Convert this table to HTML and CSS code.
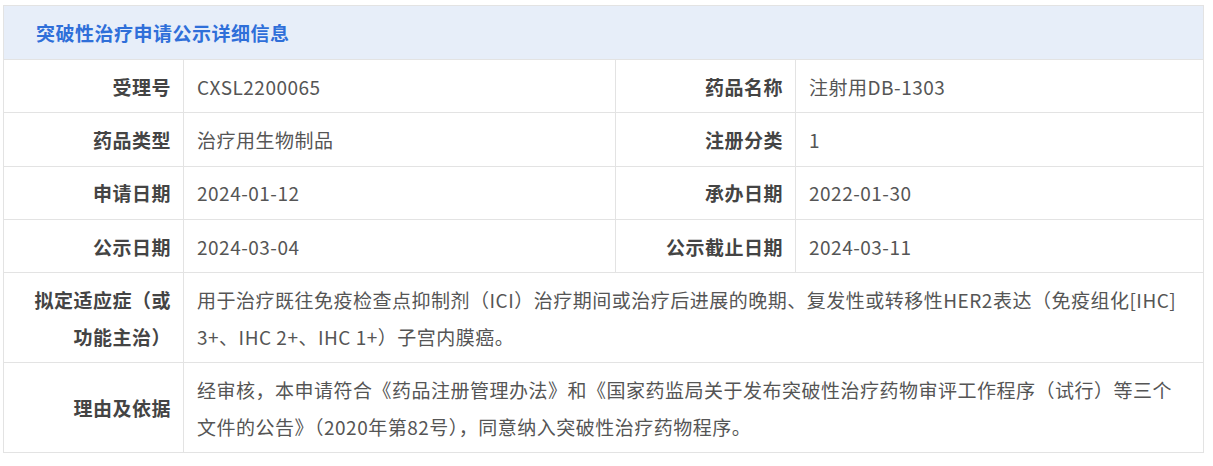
FILE: index.html
```html
<!DOCTYPE html>
<html lang="zh">
<head>
<meta charset="utf-8">
<link rel="stylesheet" href="styles.css">
</head>
<body>
<table class="detail">
  <colgroup>
    <col class="c-label"><col class="c-value"><col class="c-label"><col class="c-value2">
  </colgroup>
  <thead>
    <tr><th colspan="4" class="title">突破性治疗申请公示详细信息</th></tr>
  </thead>
  <tbody>
    <tr><td class="label">受理号</td><td class="value">CXSL2200065</td><td class="label">药品名称</td><td class="value">注射用DB-1303</td></tr>
    <tr><td class="label">药品类型</td><td class="value">治疗用生物制品</td><td class="label">注册分类</td><td class="value">1</td></tr>
    <tr><td class="label">申请日期</td><td class="value">2024-01-12</td><td class="label">承办日期</td><td class="value">2022-01-30</td></tr>
    <tr><td class="label">公示日期</td><td class="value">2024-03-04</td><td class="label">公示截止日期</td><td class="value">2024-03-11</td></tr>
    <tr class="multi"><td class="label">拟定适应症（或功能主治）</td><td class="value" colspan="3">用于治疗既往免疫检查点抑制剂（ICI）治疗期间或治疗后进展的晚期、复发性或转移性HER2表达（免疫组化[IHC] 3+、IHC 2+、IHC 1+）子宫内膜癌。</td></tr>
    <tr class="multi"><td class="label">理由及依据</td><td class="value" colspan="3">经审核，本申请符合《药品注册管理办法》和《国家药监局关于发布突破性治疗药物审评工作程序（试行）等三个文件的公告》（2020年第82号），同意纳入突破性治疗药物程序。</td></tr>
  </tbody>
</table>
</body>
</html>
```

FILE: styles.css
```css
html, body {
  margin: 0;
  padding: 0;
  background: #ffffff;
}
body {
  padding: 5px 0 0 3px;
  font-family: "Noto Sans CJK SC", "Noto Sans", sans-serif;
}
.detail {
  width: 1200px;
  border-collapse: collapse;
  table-layout: fixed;
  font-size: 19px;
  letter-spacing: 0.5px;
}
.c-label { width: 180px; }
.c-value { width: 432px; }
.c-value2 { width: 408px; }
.detail th, .detail td {
  border: 1px solid #e3e3e3;
}
.title {
  height: 54px;
  box-sizing: border-box;
  background: #e7eef9;
  color: #2f6fd9;
  font-weight: bold;
  font-size: 19px;
  text-align: left;
  padding: 0 0 0 32px;
  line-height: 52px;
  border-bottom-color: #dcdfe4;
}
.label {
  height: 53.3px;
  box-sizing: border-box;
  text-align: right;
  font-weight: bold;
  color: #444;
  padding: 0 12px 0 14px;
  line-height: 37px;
  vertical-align: middle;
}
.value {
  color: #555;
  padding: 0 20px 0 13px;
  line-height: 37px;
  vertical-align: middle;
}
.multi .label, .multi .value {
  padding-top: 7.5px;
  padding-bottom: 7.5px;
}
.multi .label {
  padding-left: 22px;
}
```
